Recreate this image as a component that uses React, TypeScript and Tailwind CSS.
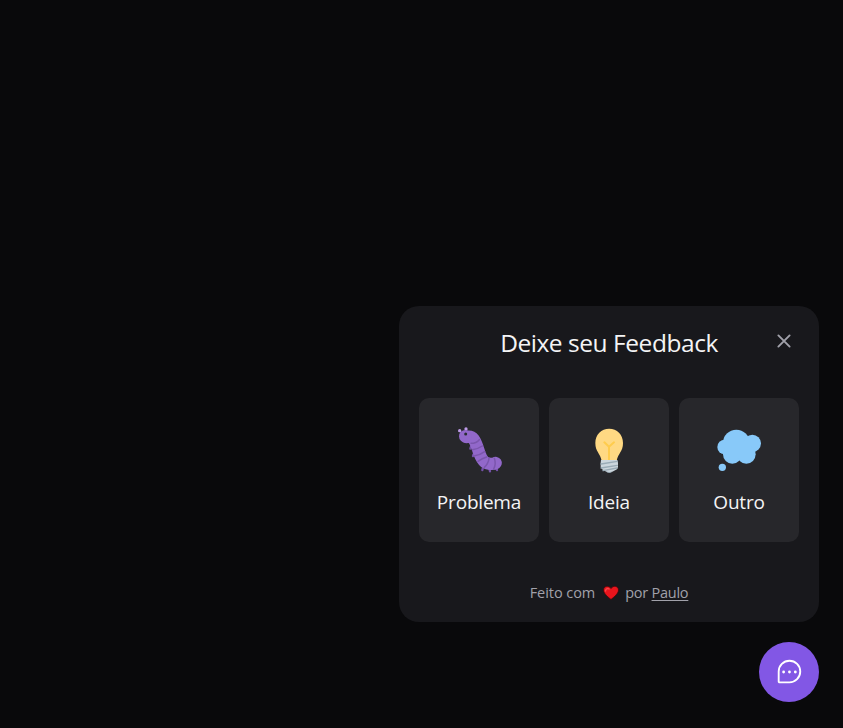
import type { ReactNode } from 'react';

function Caterpillar() {
  return (
    <svg viewBox="-3 0 180 180" className="size-[60px]" fill="none" strokeLinecap="round">
      <path d="M36 40 29 32M46 36 48 28" stroke="#9268ca" strokeWidth="4" />
      <circle cx="29" cy="32" r="5" fill="#be9be8" />
      <circle cx="48" cy="27" r="5" fill="#be9be8" />
      <path d="M63 80l-2 6M70 104l-1 4M98 146l-1 4M119 149l1 5M140 146l1 4" stroke="#7450a8" strokeWidth="7" />
      <path d="M50 51C72 46 77 67 84 87C92 114 101 130 116 131C128 133 134 131 137 129" stroke="#9268ca" strokeWidth="37" />
      <circle cx="46" cy="49" r="19" fill="#9268ca" />
      <path d="M63 70Q79 70 88 59M67 89Q84 87 97 78M74 107Q91 105 104 95M84 124Q97 115 110 111M103 142Q115 131 117 115M131 147Q139 132 133 115" stroke="#7b56ad" strokeWidth="4.500" />
      <circle cx="47" cy="42" r="4.500" fill="#292f33" />
    </svg>
  );
}

function Bulb() {
  return (
    <svg viewBox="-3 0 180 180" className="size-[60px]" fill="none">
      <path d="M129 69c0 26-15 31-19 53H65C61 100 46 95 46 69c0-26 18-43 41.500-43S129 43 129 69Z" fill="#ffd983" />
      <path d="M73 67 87 80v41M102 67 87 80" stroke="#ffcc4d" strokeWidth="6" strokeLinecap="round" />
      <path d="M63 120h49l2 8v13l-3 7-14 7q-9 4-18 0l-13-7-4-7v-13Z" fill="#ccd6dd" />
      <path d="m63 132 49-8M63 144l49-8M69 152l42-8" stroke="#99aab5" strokeWidth="4" strokeLinecap="round" />
      <path d="M77 154q11 4 21 0-4 5-10 5-7 0-11-5Z" fill="#99aab5" />
    </svg>
  );
}

function Thought() {
  return (
    <svg viewBox="-3 0 180 180" className="size-[60px]" fill="#88c9f9">
      <circle cx="79" cy="69" r="40" />
      <circle cx="127" cy="70" r="26" />
      <circle cx="44" cy="81" r="22" />
      <circle cx="67" cy="103" r="28" />
      <circle cx="109" cy="103" r="28" />
      <path d="M45 65h75v48H60Z" />
      <circle cx="37" cy="142" r="11" />
    </svg>
  );
}

function Heart() {
  return (
    <svg viewBox="0 0 32 32" className="mr-1.5 ml-2 h-4 w-4 shrink-0">
      <path d="M16 29C10 24 1 17 1 10c0-8 11-10 15-3 4-7 15-5 15 3 0 7-9 14-15 19Z" fill="#e8141c" stroke="#3b080b" strokeWidth="1.500" />
      <path d="M5 12c0-4 4-6 7-4" fill="none" stroke="#f5484a" strokeWidth="3" strokeLinecap="round" />
    </svg>
  );
}

function Option({ icon, children }: { icon: ReactNode; children: ReactNode }) {
  return (
    <button className="flex h-36 w-[120px] flex-col items-center rounded-[10px] bg-[#27272b] pt-[22px]">
      {icon}
      <span className="mt-[7px] text-[19px] leading-[30px] tracking-[-0.2px] whitespace-nowrap">{children}</span>
    </button>
  );
}

export default function App() {
  return (
    <main className="flex h-screen flex-col items-end justify-end gap-5 bg-[#09090b] pr-6 pb-[26px] font-['Open_Sans','Noto_Sans',sans-serif] text-[#f4f4f5]">
      <section className="flex h-[316px] w-[420px] flex-col rounded-[20px] bg-[#18181c] px-5">
        <header className="grid h-[92px] grid-cols-[30px_1fr_30px] pt-5">
          <h1 className="col-start-2 text-center text-[24.500px] leading-[34px] whitespace-nowrap">
            <span className="tracking-[-0.45px]">Deixe seu Feedback</span>
          </h1>
          <button className="flex h-[30px] w-[30px] items-center justify-center" aria-label="Fechar">
            <svg viewBox="0 0 256 256" className="size-5 text-[#a1a1aa]" fill="none" stroke="currentColor" strokeWidth="24" strokeLinecap="round">
              <path d="M200 56 56 200M200 200 56 56" />
            </svg>
          </button>
        </header>
        <div className="flex gap-2.5">
          <Option icon={<Caterpillar />}>Problema</Option>
          <Option icon={<Bulb />}>Ideia</Option>
          <Option icon={<Thought />}>Outro</Option>
        </div>
        <footer className="mt-[41px] flex h-5 items-center justify-center text-[14.500px] whitespace-nowrap text-[#a1a1aa]">
          <span className="tracking-[-0.05px]">Feito com</span>
          <Heart />
          <span className="tracking-[-0.25px]">por <a className="underline underline-offset-2">Paulo</a></span>
        </footer>
      </section>
      <button className="flex size-[60px] items-center justify-center rounded-full bg-[#8257e5]" aria-label="Feedback">
        <svg viewBox="0 0 256 256" className="size-[30px]" fill="none">
          <path d="M132 216H47.700a7.600 7.600 0 0 1-7.700-7.700V124a92 92 0 0 1 184 0 92 92 0 0 1-92 92Z" stroke="white" strokeWidth="16" strokeLinejoin="round" />
          <g fill="white">
            <circle cx="82" cy="128" r="12" />
            <circle cx="132" cy="128" r="12" />
            <circle cx="182" cy="128" r="12" />
          </g>
        </svg>
      </button>
    </main>
  );
}
